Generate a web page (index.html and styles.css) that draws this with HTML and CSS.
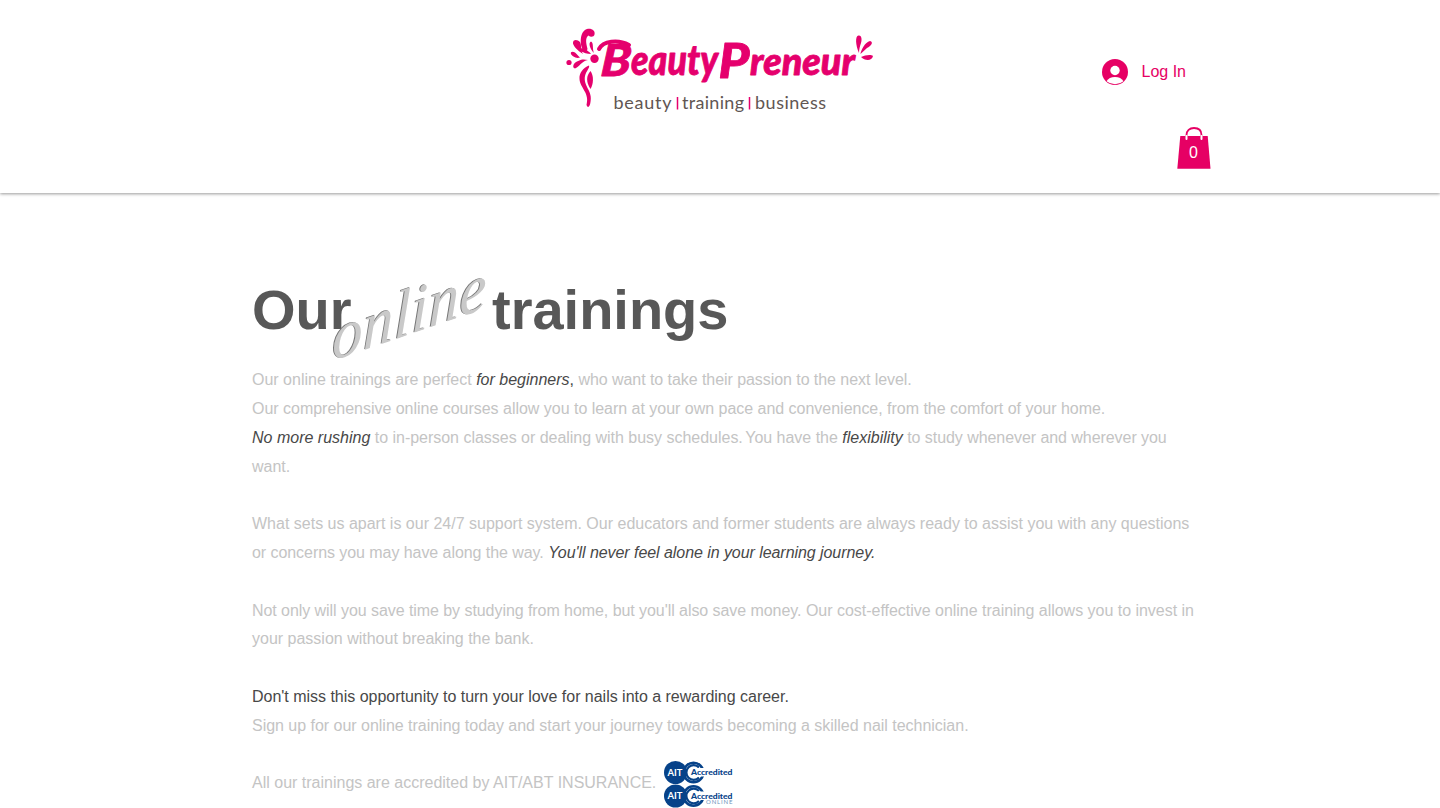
FILE: index.html
```html
<!DOCTYPE html>
<html lang="en">
<head>
<meta charset="utf-8">
<title>BeautyPreneur – Our online trainings</title>
<link rel="stylesheet" href="styles.css">
</head>
<body>
<header class="header">
  <div class="header-inner">
    <a class="logo">
      <svg width="320" height="104" viewBox="560 20 320 104" role="img" aria-label="BeautyPreneur">
        <g fill="#e5006d">
          <path d="M583.500 51C579 44 580 31 587 29C592 28 595.500 31 594.500 34.500C594 37 590.500 37.500 588.500 35.500C585 38 586 43 587.500 49C587 51 585 52 583.500 51Z"/>
          <path d="M583 54C577 50 574 47 573 43.500C572.500 39 577.500 39 580 42C582 46 580 49 583 54Z"/>
          <path d="M580 57.500C576 59 572 56 571 54C570 51.500 573 51 575 52.500C577 54 578 56 580 57.500Z"/>
          <circle cx="569" cy="62.500" r="2.600"/>
          <path d="M588 60C582 61 579 67 575 68.500C572 68 573 63 577 61.500C581 59 584 59 588 60Z"/>
          <circle cx="594.500" cy="58.800" r="4.200"/>
          <path d="M591 54C583 54 577 49 579 48C583 48 588 50 591 54Z"/>
          <path d="M594 53C590 49 588 43 591 41.500C594 43 592 48 594 53Z"/>
          <path d="M589 65.500C583 68 579 73 579.500 79C580 88 590 93 586.500 105C588 109 590 106 590.500 102C593 91 583 86 585 76C586 71 590 68 589 65.500Z"/>
          <path d="M590.500 71C586 76 586 82 590.500 89C593.500 84 594 76 590.500 71Z"/>
          <path d="M859 53C855.500 45 855 36 858.500 35.500C862 35 862 40 861 43C860 46 859 49 859 53Z"/>
          <path d="M860.500 54C861 50 865 42 870 41C874 42 871 46 867 48Z"/>
          <path d="M861 57C865 55 871 54 873 56C872 61 865 61 861 57Z"/>
          <path d="M599 49C603 41 618 39 629 45" fill="none" stroke="#e5006d" stroke-width="4" stroke-linecap="round"/>
        </g>
        <g class="wordmark">
          <text transform="translate(600 76) skewX(-5)" font-size="44" textLength="30" lengthAdjust="spacingAndGlyphs">B</text>
          <text x="631" y="75" font-size="41" textLength="87" lengthAdjust="spacingAndGlyphs">eauty</text>
          <text x="718.500" y="78" font-size="48" textLength="31" lengthAdjust="spacingAndGlyphs">P</text>
          <text x="750" y="75" font-size="37" textLength="105" lengthAdjust="spacingAndGlyphs">reneur</text>
        </g>
        <g class="tagline">
          <text x="613.500" y="108.500" textLength="58">beauty</text>
          <text x="682" y="108.500" textLength="62">training</text>
          <text x="755" y="108.500" textLength="71">business</text>
        </g>
        <path d="M677.500 97v12.500M749.500 97v12.500" stroke="#e5006d" stroke-width="1.500"/>
      </svg>
    </a>
    <a class="login">
      <svg width="26" height="26" viewBox="0 0 26 26"><circle cx="13" cy="13" r="13" fill="#e60064"/><circle cx="13" cy="11.500" r="4.700" fill="#fff"/><path d="M4.500 22.300Q7 18 13 18T21.500 22.300Q18 25.200 13 25.200T4.500 22.300Z" fill="#fff"/></svg>
      <span>Log In</span>
    </a>
    <a class="cart">
      <svg width="34" height="42" viewBox="0 0 34 42"><path d="M3.300 9H30.700L33.500 41.800H.3Z" fill="#e60064"/><path d="M9.500 9V8C9.500 3.500 12.500 1 17 1S24.500 3.500 24.500 8V9" fill="none" stroke="#e60064" stroke-width="1.800"/><path d="M9.500 9V12M24.500 9V12" stroke="#fff" stroke-width="2" stroke-linecap="round"/><text class="count" x="16.500" y="31" text-anchor="middle">0</text></svg>
    </a>
  </div>
</header>
<main class="content">
  <h1 class="title">
    <span class="title-a">Our</span>
    <svg class="script" width="190" height="110" viewBox="0 0 190 110"><g transform="translate(11 96) rotate(-19) skewX(-20)"><text x="-1" y="-.6" class="script-shadow" textLength="163">online</text><text class="script-face" textLength="163">online</text></g></svg>
    <span class="title-b">trainings</span>
  </h1>
  <div class="copy">
    <p>Our online trainings are perfect <em>for beginners</em><b>,</b> <span class="tight">who want to take their passion to the next level.</span></p>
    <p class="snug">Our comprehensive online courses allow you to learn at your own pace and convenience, from the comfort of your home.</p>
    <p><em>No more rushing</em> <span class="snug">to in-person classes or dealing with busy schedules.</span><span class="kern"> </span><span class="snug">You have the</span> <em>flexibility</em> <span class="tight">to study whenever and wherever you</span><br>want.</p>
    <p class="gap">What sets us apart is our 24/7 support system. Our educators and former students are always ready to assist you with any questions<br><span class="tight">or concerns you may have along the way. </span><em class="tight">You'll never feel alone in your learning journey.</em></p>
    <p class="gap"><span class="tight">Not only will you save time by studying from home, but you'll also save money.</span> <span class="snug">Our cost-effective online training allows you to invest in</span><br>your passion without breaking the bank.</p>
    <p class="gap"><b class="snug">Don't miss this opportunity to turn your love for nails into a rewarding career.</b></p>
    <p class="snug">Sign up for our online training today and start your journey towards becoming a skilled nail technician.</p>
    <p class="gap accredited"><span>All our trainings are accredited by AIT/ABT INSURANCE.</span>
      <svg class="badges" width="72" height="48" viewBox="0 0 72 48">
        <g id="badge"><circle cx="29.500" cy="11.500" r="9.800" fill="#fff" stroke="#064289" stroke-width="2.600"/><path d="M35 6.500A7.300 7.300 0 1 0 35 16.500" fill="none" stroke="#064289" stroke-width="2.200"/><circle cx="11.500" cy="11.500" r="11.500" fill="#064289"/><rect x="27.500" y="7" width="14" height="8.500" fill="#fff"/><text x="3.500" y="14.800" class="ait" textLength="15" lengthAdjust="spacingAndGlyphs">AIT</text><text x="27" y="14" class="acc" textLength="41.500" lengthAdjust="spacingAndGlyphs">Accredited</text></g>
        <use href="#badge" y="23.500"/>
        <text x="42" y="43" class="onl" textLength="26.500">ONLINE</text>
      </svg>
    </p>
  </div>
</main>
</body>
</html>
```
FILE: styles.css
```css
body { margin: 0; height: 808px; overflow: hidden; background: #fff; font: 16px/28.8px "Liberation Sans", Arial, sans-serif; color: #c4c4c4; }
.header { height: 193px; box-shadow: 0 1px 3px rgba(0,0,0,.4); }
.header-inner { display: grid; grid-template-columns: 560px 320px 222px 1fr; grid-template-rows: 127px 66px; }
.logo { grid-column: 2; padding-top: 20px; }
.logo svg { display: block; }
.wordmark { fill: #e5006d; stroke: #e5006d; stroke-width: .8; stroke-linejoin: round; font-family: Lato, sans-serif; font-weight: 900; font-style: italic; }
.tagline { fill: #615653; font: 18px Lato, sans-serif; }
.login { grid-column: 4; display: flex; align-items: center; gap: 13.5px; height: 26px; padding-top: 59px; color: #e60064; }
.cart { grid-column: 4; grid-row: 2; padding-left: 74.5px; }
.cart svg { display: block; }
.count { fill: #fff; font: 16px "Liberation Sans", sans-serif; }
.content { padding: 88px 0 0 252px; }
.title { display: flex; position: relative; margin: 0; height: 85.300px; font-size: 56px; line-height: 58px; color: #585858; }
.title-a { width: 240px; }
.script { position: absolute; left: 69px; top: -16px; overflow: visible; font-family: "Liberation Serif", serif; font-style: italic; font-weight: 400; font-size: 64px; }
.script-shadow { fill: #777; }
.script-face { fill: #c9c9c9; }
.copy { width: 980px; white-space: nowrap; }
.copy p { margin: 0; }
.copy .gap { margin-top: 28.800px; }
.copy em, .copy b { color: #484848; font-weight: 400; }
.tight { letter-spacing: -.06px; }
.snug { letter-spacing: -.02px; }
.kern { letter-spacing: -2px; }
.accredited { display: flex; height: 29px; }
.badges { margin: -8px 0 0 8px; flex: none; overflow: visible; }
.ait { fill: #fff; font: 700 9px Lato, sans-serif; }
.acc { fill: #064289; font: 900 8px Lato, sans-serif; }
.onl { fill: #6e92ba; font: 6px Lato, sans-serif; }
```
